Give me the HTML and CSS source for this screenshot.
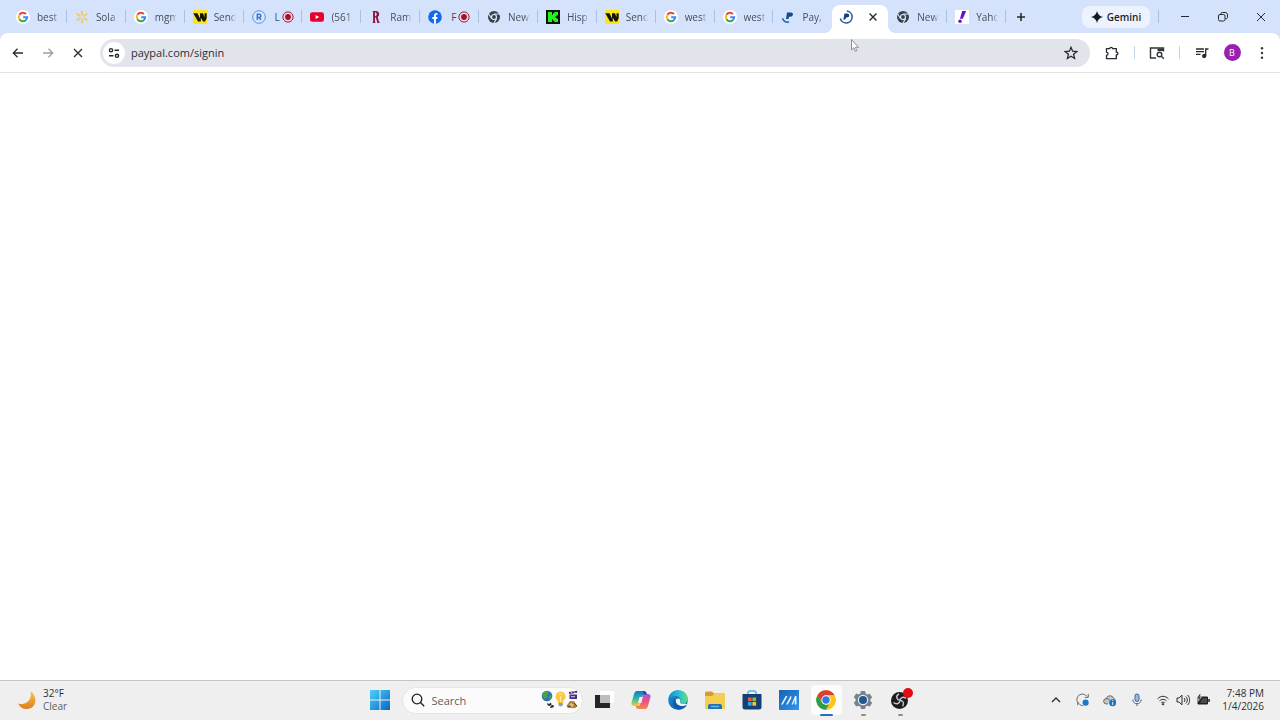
FILE: index.html
```
<!DOCTYPE html>
<html lang="en">
<head>
<meta charset="utf-8">
<title>paypal.com/signin</title>
<link rel="stylesheet" href="styles.css">
</head>
<body>
<svg class="defs" aria-hidden="true">
  <defs>
    <linearGradient id="win" x1="0" y1="0" x2="1" y2="1"><stop offset="0" stop-color="#4fd0f5"/><stop offset="1" stop-color="#0768c4"/></linearGradient>
    <linearGradient id="moon" x1="0" y1="0" x2="0" y2="1"><stop offset="0" stop-color="#fcc64a"/><stop offset="1" stop-color="#dc7f1d"/></linearGradient>
    <linearGradient id="edgeTop" x1="0" y1="0" x2="1" y2="0"><stop offset="0" stop-color="#1689d4"/><stop offset=".55" stop-color="#2bbfd0"/><stop offset="1" stop-color="#5fe07c"/></linearGradient>
    <linearGradient id="edgeLow" x1="0" y1="0" x2="1" y2="1"><stop offset="0" stop-color="#1b9be0"/><stop offset="1" stop-color="#0c4a96"/></linearGradient>
    <linearGradient id="copA" x1="0" y1="0" x2="0" y2="1"><stop offset="0" stop-color="#1674d4"/><stop offset=".5" stop-color="#2bbba0"/><stop offset="1" stop-color="#f0d032"/></linearGradient>
    <linearGradient id="copB" x1="0" y1="0" x2="0" y2="1"><stop offset="0" stop-color="#a35be0"/><stop offset=".5" stop-color="#ec5480"/><stop offset="1" stop-color="#f7884a"/></linearGradient>
    <linearGradient id="ma" x1="0" y1="0" x2="1" y2="1"><stop offset="0" stop-color="#1763b4"/><stop offset="1" stop-color="#2f96ee"/></linearGradient>
  </defs>
  <symbol id="google" viewBox="0 0 14 14">
    <circle cx="7" cy="7" r="7" fill="#fff"/>
    <g fill="none" stroke-width="2"><path d="M3.4 4.8A4.2 4.2 0 0 1 10 4" stroke="#ea4335"/><path d="M3.5 9.3A4.2 4.2 0 0 1 3.5 4.7" stroke="#fbbc05"/><path d="M9.8 10.2A4.2 4.2 0 0 1 3.4 9.2" stroke="#34a853"/><path d="M7.2 7.2h4A4.2 4.2 0 0 1 9.7 10.3" stroke="#4285f4"/></g>
  </symbol>
  <symbol id="spark" viewBox="0 0 14 14">
    <g stroke="#efcb6e" stroke-width="2" stroke-linecap="round"><path d="M7 1.5v3M7 9.5v3M2.2 4.2l2.6 1.5M9.2 8.3l2.6 1.5M2.2 9.8l2.6-1.5M9.2 5.7l2.6-1.5"/></g>
  </symbol>
  <symbol id="wu" viewBox="0 0 14 14">
    <path fill="#fde51e" d="M0 0h14v14H0z"/><path fill="#16150c" d="M.3 3.2h4.2L7 8.500V3.200h3l1.500 4V3.200h2.200v5l-1.600 3.200h-2L7.800 7.800v3.600H5z"/>
  </symbol>
  <symbol id="ring-r" viewBox="0 0 14 14">
    <circle cx="7" cy="7" r="6.3" fill="#d9e9fd" stroke="#5b8fe0" stroke-width="1"/><path d="M5.300 10V4.200h2a1.600 1.600 0 0 1 0 3.200h-2M7.200 7.400 9 10" fill="none" stroke="#3b74d3" stroke-width="1.500"/>
  </symbol>
  <symbol id="rec" viewBox="0 0 12 12">
    <circle cx="6" cy="6" r="5.1" fill="#f5dbe5" stroke="#8e1938" stroke-width="1"/><circle cx="6" cy="6" r="2.900" fill="#a3102f"/>
  </symbol>
  <symbol id="youtube" viewBox="0 0 14 14"><rect y="2.300" width="14" height="9.400" rx="2.200" fill="#e9002b"/><path d="M5.600 4.900v4.200L9.200 7z" fill="#fff"/></symbol>
  <symbol id="letter-r" viewBox="0 0 14 14"><path d="M3.300 1h4.200a3.200 3.200 0 0 1 1.200 5.900l1.400 5.200 1 .9H8.300L6.900 7.400H6v4.700l.8.900H3.300l.8-1V2zM6 2.300v3.900c2.100.2 2.500-3.800 0-3.900z" fill="#8b1747" fill-rule="evenodd"/></symbol>
  <symbol id="facebook" viewBox="0 0 14 14"><circle cx="7" cy="7" r="6.800" fill="#1668ed"/><path d="M6 13.700V9H4.300V7H6V5.500C6 3.600 7 2.700 9.500 3v1.700c-1.300-.1-1.600.2-1.600 1.100V7h1.600l-.3 2H7.900v4.700z" fill="#fff"/></symbol>
  <symbol id="chrome-mono" viewBox="0 0 14 14"><circle cx="7" cy="7" r="6" fill="#37434c"/><circle cx="7" cy="7" r="2.500" fill="#37434c" stroke="#dce8fb" stroke-width="1.200"/><path d="M7 4h6M4.400 8.500 1.600 3.800M9.600 8.600 7 13" stroke="#dce8fb" stroke-width="1.100"/></symbol>
  <symbol id="kick" viewBox="0 0 14 14"><path fill="#0b150b" d="M0 0h14v14H0z"/><path fill="#23f31e" d="M2 2h4v2.700h1V3.300h1.300V2H12v3.300h-1.300v1H9.500v1.400h1.200v1H12V12H8.300v-1.300H7V9.300H6V12H2z"/></symbol>
  <symbol id="pay" viewBox="0 0 14 14"><path d="M6 2.500h4c3 0 2.500 4.200-.7 4.200H8L7.500 9H5z" fill="#124a96"/><path d="M1.500 8.200A5.800 5.800 0 0 0 8 12" fill="none" stroke="#2865b7" stroke-width="1.600"/></symbol>
  <symbol id="pay-load" viewBox="0 0 14 14"><path d="M5.500 3.500h2.800c2.800 0 2.400 4-.4 4h-1L6.500 9.500H4.300z" fill="#123e83"/><path d="M1.300 8.500A6 6 0 1 0 7.800 1" fill="none" stroke="#225796" stroke-width="1.500"/></symbol>
  <symbol id="yahoo" viewBox="0 0 14 14"><path fill="#fff" d="M0 0h14v14H0z"/><path d="M7.200 1h4L7.800 8.800H5z" fill="#6413bd"/><circle cx="5" cy="11.200" r="1.700" fill="#6413bd"/></symbol>
  <symbol id="cross" viewBox="0 0 14 14"><path d="M3 3L11 11M11 3L3 11"/></symbol>
</svg>

<header class="browser">
  <div class="strip">
    <nav class="tabs" aria-label="Tabs">
      <button class="tab"><svg class="fav"><use href="#google"/></svg><span class="title">best</span></button>
      <button class="tab"><svg class="fav"><use href="#spark"/></svg><span class="title">Sola</span></button>
      <button class="tab"><svg class="fav"><use href="#google"/></svg><span class="title">mgm</span></button>
      <button class="tab"><svg class="fav"><use href="#wu"/></svg><span class="title">Send</span></button>
      <button class="tab"><svg class="fav"><use href="#ring-r"/></svg><span class="title short">L</span><svg class="rec"><use href="#rec"/></svg></button>
      <button class="tab"><svg class="fav"><use href="#youtube"/></svg><span class="title">(561</span></button>
      <button class="tab"><svg class="fav"><use href="#letter-r"/></svg><span class="title">Ram</span></button>
      <button class="tab"><svg class="fav"><use href="#facebook"/></svg><span class="title short">F</span><svg class="rec"><use href="#rec"/></svg></button>
      <button class="tab"><svg class="fav"><use href="#chrome-mono"/></svg><span class="title">New</span></button>
      <button class="tab"><svg class="fav"><use href="#kick"/></svg><span class="title">Hisp</span></button>
      <button class="tab"><svg class="fav"><use href="#wu"/></svg><span class="title">Send</span></button>
      <button class="tab"><svg class="fav"><use href="#google"/></svg><span class="title">west</span></button>
      <button class="tab"><svg class="fav"><use href="#google"/></svg><span class="title">west</span></button>
      <button class="tab plain"><svg class="fav"><use href="#pay"/></svg><span class="title">Pay,</span></button>
      <div class="tab active"><svg class="fav"><use href="#pay-load"/></svg><button class="close" aria-label="Close tab"><svg class="line bold"><use href="#cross"/></svg></button></div>
      <button class="tab"><svg class="fav"><use href="#chrome-mono"/></svg><span class="title">New</span></button>
      <button class="tab"><svg class="fav"><use href="#yahoo"/></svg><span class="title">Yaho</span></button>
    </nav>
    <button class="new-tab" aria-label="New tab"><svg class="line bold" viewBox="0 0 14 14"><path d="M7 3v8M3 7h8"/></svg></button>
    <button class="gemini"><svg viewBox="0 0 12 12"><path d="M6 0Q7 5 12 6 7 7 6 12 5 7 0 6 5 5 6 0z" fill="#15181c"/></svg>Gemini</button>
    <span class="divider strong"></span>
    <button class="win" aria-label="Minimize"><svg class="line" viewBox="0 0 14 14"><path d="M3 6.500h8"/></svg></button>
    <button class="win" aria-label="Restore"><svg class="line" viewBox="0 0 14 14"><rect x="2.500" y="4.500" width="6.500" height="6.500" rx="1.500"/><path d="M4.800 4.300V4c0-.9.5-1.500 1.400-1.500H9c1.600 0 2.500.9 2.500 2.500v2.300c0 .9-.6 1.500-1.500 1.500h-.8"/></svg></button>
    <button class="win" aria-label="Close window"><svg class="line"><use href="#cross"/></svg></button>
  </div>

  <div class="toolbar">
    <button class="tool" aria-label="Back"><svg class="line mid" viewBox="0 0 14 14"><path d="M12 7H2.500M6.500 2.700 2.300 7l4.200 4.300"/></svg></button>
    <button class="tool faded" aria-label="Forward"><svg class="line mid" viewBox="0 0 14 14"><path d="M2 7h9.500M7.500 2.700 11.700 7l-4.200 4.300"/></svg></button>
    <button class="tool" aria-label="Stop"><svg class="line mid"><use href="#cross"/></svg></button>
    <div class="omnibox">
      <button class="site" aria-label="Site information"><svg viewBox="0 0 14 14" fill="none" stroke="#252a30" stroke-width="1.400"><circle cx="4" cy="4.200" r="1.600"/><path d="M7.500 4.200H12M2 9.800h4.500"/><circle cx="10" cy="9.800" r="1.600"/></svg></button>
      <input class="url" type="text" value="paypal.com/signin" aria-label="Address" spellcheck="false">
      <button class="star" aria-label="Bookmark this tab"><svg class="line mid" viewBox="0 0 14 14"><path d="m7 1.300 1.600 3.900 4.200.4-3.200 2.700 1 4.200L7 10.300l-3.600 2.200 1-4.200-3.200-2.700 4.200-.4z"/></svg></button>
    </div>
    <button class="tool ext" aria-label="Extensions"><svg class="line mid" viewBox="0 0 14 14"><path d="M1.500 2.700h3.200C4.700 1 7.600 1 7.600 2.700h3.700v3.400c2.300 0 2.300 2.900 0 2.900v3.700H1.500V9.300c2.100-.2 2.100-3 0-3.200z"/></svg></button>
    <span class="divider"></span>
    <button class="tool" aria-label="Search this page"><svg class="wide" viewBox="0 0 16 14" fill="none" stroke="#30353a" stroke-width="1.400"><path d="M7 12H1.500V2H14.500V5.500"/><path d="M8.500 2.500H14v2.500H8.500z" fill="#30353a" stroke="none"/><circle cx="10.500" cy="8.500" r="2.300"/><path d="m12.300 10.300 2.500 2.500"/></svg></button>
    <span class="divider"></span>
    <button class="tool" aria-label="Media controls"><svg class="line mid" viewBox="0 0 14 14"><path d="M1 3h8M1 5.700h8M1 8.400h4.500M10.700 10V3h2.800"/><circle cx="9.200" cy="10" r="1.500" fill="#30353a"/></svg></button>
    <button class="tool" aria-label="Profile"><span class="avatar">B</span></button>
    <button class="tool" aria-label="Menu"><svg viewBox="0 0 14 14" fill="#30353a"><circle cx="7" cy="2.200" r="1.200"/><circle cx="7" cy="7" r="1.200"/><circle cx="7" cy="11.800" r="1.200"/></svg></button>
  </div>
</header>

<main class="page"></main>

<footer class="taskbar">
  <button class="weather">
    <svg viewBox="0 0 20 20"><path d="M13.400 1C21 6 20 19 9.500 19 5.500 19 2.500 17 1 13.500 9.500 16 15.500 9.500 13.400 1z" fill="url(#moon)"/></svg>
    <span>32°F<br><span class="soft">Clear</span></span>
  </button>
  <div class="dock">
    <button class="app" aria-label="Start"><svg viewBox="0 0 20 20"><path d="M0 0h9.500v9.500H0zM10.500 0H20v9.500h-9.500zM0 10.500h9.500V20H0zM10.500 10.500H20V20h-9.500z" fill="url(#win)"/></svg></button>
    <label class="search">
      <svg class="glass" viewBox="0 0 14 14" fill="none" stroke="#1d1d1f" stroke-width="1.300"><circle cx="6" cy="6" r="4.800"/><path d="m9.500 9.500 3.700 3.700"/></svg>
      <input type="text" placeholder="Search" aria-label="Search">
      <svg class="art" viewBox="0 0 38 20"><circle cx="6" cy="6" r="5.300" fill="#2a73c0"/><path d="M2 2.500 6 1l2 2-2 2 1 2-3 2-3-3zM8 6l3-1-1 4-2 1z" fill="#4aa348"/><path d="m6 13 2 1 2-1.500.5 2.500L8 16l-1.500-1zM9 17l2-2 2 .5-.5 1.800-3 .7z" fill="#25282b"/><path d="M19.500 1.500a5 5 0 0 1 2.800 9.200V13h-5.400v-2.300a5 5 0 0 1 2.600-9.200z" fill="#f7c946"/><path d="M18 4.500c1-1.500 2.500-1 3 0M19.500 6v6" fill="none" stroke="#fff0a0"/><path d="M17.500 13h4.300v2.500l-2 1-2.300-1z" fill="#929da4"/><path d="m28 2 8-1.300.3 2L28 4zM28.500 4.500H36V9h-7.500z" fill="#49327d"/><path d="m30 1.600 1 1.600m2-2 1 1.600M30 6.700h4" stroke="#d9cdec"/><path d="M25.500 16 29 11l4 .2 3.500 5.300-3 1.800-7-.8z" fill="#a77a37"/><path d="m28 15 2-2.300 3 2-1.500 2.500z" fill="#e6c372"/><path d="m27 17 3-1m3-3 3 3" stroke="#55421f"/></svg>
    </label>
    <button class="app" aria-label="Task view"><svg viewBox="0 0 20 20"><path d="M1 5h15v13H1z" fill="#252525"/><path d="M6 1h14v12H6z" fill="#fff" opacity=".9"/><path d="M6 5h10v8H6z" fill="#bdbdbd"/></svg></button>
    <button class="app" aria-label="Copilot"><svg viewBox="0 0 20 20"><path d="M6 1h7c1.500 0 2 1 2.400 2l.6 2h-3c-1 0-1.600.6-2 1.700L8.500 14c-.5 1.500-1.400 2-3 2H3c-2 0-3-1.500-2.400-3.500L3 4C3.600 2 4.500 1 6 1z" fill="url(#copA)"/><path d="M14 19H7.500C6 19 5.300 18 5 17l-.5-1H7c1 0 1.700-.6 2-1.700L11.500 6c.5-1.500 1.300-2 3-2H17c2 0 3 1.500 2.400 3.500L17 16c-.6 2-1.500 3-3 3z" fill="url(#copB)"/><path d="M8.500 7h3.300l-1.500 6H7z" fill="#f3f0ef"/><path d="M12 1h1c1.500 0 2 1 2.400 2l.6 1.500h-3.500z" fill="#1c4fae"/></svg></button>
    <button class="app" aria-label="Edge"><svg viewBox="0 0 20 20"><circle cx="10" cy="10" r="9.800" fill="url(#edgeLow)"/><path d="M.3 9C1.500 3 5.500.2 10 .2c6 0 9.800 4.300 9.800 8.500 0 3.300-2.500 5-5.300 5-2.200 0-3.300-.9-2.500-2 1.600-2.400-.5-5.700-4.200-5.700C4 6 1 7.500.3 9z" fill="url(#edgeTop)"/><path d="M8.200 9.200c-1.800 3 1.500 7.300 5.800 7.200 2 0 3.500-.6 5-1.700-.6-.8-1.200-1.300-1.200-1.300-3 1-6.500.3-5.800-1.700 1-1.700-.6-4.400-3.800-2.500z" fill="#f2f7fa"/><path d="M7 8.500C2 13 6 18.700 11 19.700c3.500-.4 6.500-2.200 8-4.700-5 2.500-12.500.5-12-6.500z" fill="#155aa5"/></svg></button>
    <button class="app" aria-label="File Explorer"><svg viewBox="0 0 20 20"><path d="M0 3q0-1.500 1.500-1.500H7l2 2h9.500Q20 3.500 20 5v3H0z" fill="#d99c2b"/><path d="M0 6h7l2-2h9.500Q20 4 20 5.500V19H0z" fill="#f4cf52"/><path d="M3 19v-3q0-2 2-2h10q2 0 2 2v3z" fill="#1b73b8"/><path d="M6 16.500h8" stroke="#67b6e1" stroke-width="1.500"/></svg></button>
    <button class="app" aria-label="Microsoft Store"><svg viewBox="0 0 20 20"><path d="M6 5V3q0-2 2-2h4q2 0 2 2v2" fill="none" stroke="#4bb9e5" stroke-width="1.500"/><path d="M.5 4h19v13q0 2.500-2.500 2.500H3Q.5 19.500.5 17z" fill="#153f75"/><path d="M6 7.500h3.700v3.700H6z" fill="#f15b37"/><path d="M10.400 7.500h3.700v3.700h-3.700z" fill="#7ac143"/><path d="M6 12h3.700v3.700H6z" fill="#28a8e2"/><path d="M10.400 12h3.700v3.700h-3.700z" fill="#fbc23a"/></svg></button>
    <button class="app" aria-label="MyASUS"><svg viewBox="0 0 20 20"><path d="M0 0h20v20H0z" fill="url(#ma)"/><path d="M2 14.500h1.800L8.500 6H6.700zM7 14.500h1.800l3.500-6.300V6h-.7zM12.500 14.500l3.500-8.500h1.500v8.500h-1.800V10l-1.700 4.500z" fill="#e4f3ff"/></svg></button>
    <button class="app current" aria-label="Chrome"><svg viewBox="0 0 20 20"><circle cx="10" cy="10" r="9.700" fill="#f9c41c"/><path d="M1.500 5.200A9.700 9.700 0 0 1 18.500 5.300H10L5.900 12.300z" fill="#df3c32"/><path d="M1.500 5.200 5.900 12.400 10 14.700h4l-4 5A9.700 9.700 0 0 1 1.500 5.200z" fill="#2c9e4b"/><path d="M14 12.500 9.900 19.700A9.700 9.700 0 0 0 18.500 5.300H10z" fill="#f9c41c"/><circle cx="10" cy="10" r="4.700" fill="#fff"/><circle cx="10" cy="10" r="3.700" fill="#2d79e4"/></svg></button>
    <button class="app running" aria-label="Settings"><svg viewBox="0 0 20 20"><path d="M8 1h4l.7 2.600 1.500.8 2.600-.7 2.400 3.700L17.400 9v2l1.800 1.800-2.300 3.600-2.700-.7-1.500.8L12 19H8l-.7-2.500-1.500-.8-2.700.7-2.300-3.600L2.600 11V9L.8 7.200l2.300-3.600 2.700.8 1.500-.8z" fill="#77818b"/><circle cx="10" cy="10" r="5.200" fill="#e6edf4"/><circle cx="10" cy="10" r="4" fill="#21588e"/></svg></button>
    <button class="app running" aria-label="OBS Studio"><svg viewBox="0 0 20 20"><circle cx="9.500" cy="10.500" r="8.500" fill="#1d1c1f"/><path d="M9 4c-4 2-2 6 .8 6.300 3.200.3 5 3 2.700 6M16 8.500c-3-2.700-6-.6-6 2-.2 3-3.500 4.300-6.500 2" fill="none" stroke="#c8c8ca" stroke-width="1.400"/></svg><span class="badge"></span></button>
  </div>
  <div class="tray">
    <button class="status" aria-label="Show hidden icons"><svg class="line mid" viewBox="0 0 14 14"><path d="m3 9 4-4 4 4"/></svg></button>
    <button class="status" aria-label="Update"><svg viewBox="0 0 16 16"><path d="M2 11A6 6 0 0 1 12.500 4M14 1v4h-4M2.500 10.500c1 2.500 3 4 5.500 4M2 14v-3" fill="none" stroke="#555"/><circle cx="11" cy="11" r="3.500" fill="#1b78c7"/></svg></button>
    <button class="status" aria-label="OneDrive"><svg viewBox="0 0 16 16"><path d="M5.500 12.500H4a3 3 0 0 1-.5-6C5 2.500 10.500 2 12 6a3 3 0 0 1 2 3" fill="#c8c8c8" stroke="#555"/><path d="M3.500 6.500C6 6 7 8 9 9" fill="none" stroke="#555"/><circle cx="11" cy="11" r="4" fill="#1b78c7"/><path d="M11 10.300V13.500M11 8.300v1" stroke="#fff"/></svg></button>
    <button class="status" aria-label="Microphone"><svg viewBox="0 0 14 14" fill="none" stroke="#456295"><rect x="5" y="1" width="4" height="7.500" rx="2" fill="#9eb8dc"/><path d="M2.800 6.500c0 5.600 8.400 5.600 8.400 0M7 10.800V13"/></svg></button>
    <button class="status net" aria-label="Network, sound and battery">
      <svg viewBox="0 0 14 14" fill="none" stroke="#2d2d2d"><path d="M1.500 6c3-3.600 8-3.600 11 0M3.500 8c2-2.200 5-2.200 7 0M5.300 9.900c1-1 2.400-1 3.400 0"/><circle cx="7" cy="11.300" r=".7" fill="#2d2d2d"/></svg>
      <svg viewBox="0 0 14 14" fill="none" stroke="#2d2d2d"><path d="M1 5h2l3-2.800v9.600L3 9H1zM8 5c1.300 1.100 1.300 2.900 0 4M9.700 3.500c2.200 2 2.200 5 0 7M11.500 2c3 3 3 7 0 10"/></svg>
      <svg viewBox="0 0 14 14"><path d="M2 4h9.500v7H2z" fill="#202020" stroke="#202020" stroke-linejoin="round"/><path d="M12.300 6h1.500v3h-1.500z" fill="#202020"/><path d="M6.500 5H11v5H4z" fill="#4a4a4a"/><path d="M3.500 1 .8 5.200h2L2 8.500l3.500-4.300H3.700L5 1z" fill="#202020" stroke="#eee" stroke-width=".6"/></svg>
    </button>
    <button class="clock">7:48 PM<br>1/4/2026</button>
  </div>
</footer>

<svg class="pointer" viewBox="0 0 8 13"><path d="M.5.500v10.300l2.200-2 1.500 3.500 1.600-.7-1.500-3.300h3.100z" fill="#fff" stroke="#74777e" stroke-width=".8"/></svg>
</body>
</html>
```
FILE: styles.css
```
* { box-sizing: border-box; }

body {
  margin: 0;
  min-height: 100vh;
  display: flex;
  flex-direction: column;
  background: #fff;
  color: #34373c;
  font-family: "Open Sans", "Noto Sans", sans-serif;
  font-size: 11px;
}

button {
  margin: 0;
  padding: 0;
  border: 0;
  background: none;
  color: inherit;
  font: inherit;
  display: flex;
  align-items: center;
  justify-content: center;
  flex: none;
}

input {
  border: 0;
  padding: 0;
  margin: 0;
  background: none;
  font: inherit;
  min-width: 0;
  outline: 0;
}

svg { display: block; width: 14px; height: 14px; flex: none; }
.defs { position: absolute; width: 0; height: 0; }

.line { fill: none; stroke: #272b31; stroke-width: 1; }
.line.mid { stroke-width: 1.3; }
.line.bold { stroke-width: 1.6; }

/* Tab strip */
.browser { background: #d5e2fc; }
.strip { display: flex; align-items: center; height: 33px; padding-left: 8px; }
.tabs { display: flex; flex: 1; max-width: 998px; height: 33px; min-width: 0; }
.tab {
  flex: 1 1 0;
  min-width: 0;
  position: relative;
  display: flex;
  align-items: center;
  justify-content: flex-start;
  padding-left: 8px;
  color: #464e5c;
  font-size: 10px;
}
.tab::after {
  content: "";
  position: absolute;
  right: 0;
  top: 10px;
  width: 1px;
  height: 13px;
  background: #a9c0e6;
}
.tab.plain::after { display: none; }
.title {
  margin-left: 7px;
  width: 24px;
  overflow: hidden;
  white-space: nowrap;
  text-align: left;
  mask-image: linear-gradient(90deg, #000 16px, transparent 22px);
}
.title.short { width: 6px; margin-left: 9px; mask-image: none; }
.rec { width: 12px; height: 12px; margin-left: 1px; }

.tab.active {
  flex: 0 0 56px;
  align-self: flex-end;
  height: 28px;
  padding: 0 8px 5px 7px;
  justify-content: space-between;
  border-radius: 8px 8px 0 0;
  background: #fff;
}
.tab.active::after,
.tab.active::before {
  content: "";
  position: absolute;
  top: auto;
  bottom: 0;
  width: 8px;
  height: 8px;
}
.tab.active::before { left: -8px; background: radial-gradient(circle at 0 0, transparent 8px, #fff 8px); }
.tab.active::after { right: -8px; background: radial-gradient(circle at 100% 0, transparent 8px, #fff 8px); }
.close { width: 14px; height: 14px; }
.close svg { width: 12px; height: 12px; }

.new-tab { width: 29px; height: 28px; }
.gemini {
  margin-left: auto;
  width: 68px;
  height: 22px;
  gap: 4px;
  border-radius: 8px;
  background: #ecf3fe;
  color: #1b1e23;
  font-size: 10px;
  font-weight: 600;
}
.gemini svg { width: 12px; height: 12px; }
.divider { width: 1px; height: 13px; margin: 0 7px; background: #c3d5ed; flex: none; }
.divider.strong { margin-left: 8px; background: #a9bdea; }
.win { width: 38px; height: 32px; }

/* Toolbar */
.toolbar {
  display: flex;
  align-items: center;
  height: 40px;
  padding: 0 3px;
  border-bottom: 1px solid #e2e2e0;
  border-radius: 8px 8px 0 0;
  background: #fff;
}
.tool { width: 30px; height: 28px; }
.tool.faded { opacity: .45; }
.tool .wide { width: 16px; }
.omnibox {
  flex: 1;
  min-width: 0;
  height: 28px;
  margin: 0 7px;
  padding: 0 12px 0 3px;
  display: flex;
  align-items: center;
  border-radius: 14px;
  background: #e2e4ec;
}
.site { width: 22px; height: 22px; border-radius: 50%; background: #fff; }
.url { flex: 1; margin-left: 6px; color: #2b2f36; }
.avatar {
  width: 17px;
  height: 17px;
  border-radius: 50%;
  background: #9a21b0;
  color: #fff;
  font-size: 9px;
  line-height: 17px;
}

.page { flex: 1; }

/* Taskbar */
.taskbar {
  display: grid;
  grid-template-columns: 1fr auto 1fr;
  align-items: center;
  height: 40px;
  padding-bottom: 1px;
  border-top: 1px solid #c4c4c4;
  background: #efefef;
}
.weather, .clock { font-size: 10px; line-height: 13px; color: #303030; }
.weather { justify-self: start; gap: 6px; padding-left: 17px; text-align: left; }
.weather svg { width: 20px; height: 20px; }
.soft { color: #606060; }
.dock { display: flex; align-items: center; }
.app { position: relative; width: 37px; height: 38px; }
.app svg { width: 20px; height: 20px; }
.app.current::before {
  content: "";
  position: absolute;
  inset: 4px 3px;
  border-radius: 4px;
  background: #fcfcfc;
}
.app.current svg { position: relative; }
.app.running::after,
.app.current::after {
  content: "";
  position: absolute;
  bottom: 3px;
  width: 5px;
  height: 2px;
  border-radius: 1px;
  background: #8d8d8d;
}
.app.current::after { width: 13px; background: #2370c0; }
.badge {
  position: absolute;
  top: 7px;
  right: 6px;
  width: 10px;
  height: 10px;
  border-radius: 50%;
  background: #e70914;
}
.search {
  display: flex;
  align-items: center;
  width: 181px;
  height: 27px;
  margin: 0 3px;
  padding: 0 3px 0 8px;
  border: 1px solid #e5e5e5;
  border-radius: 14px;
  background: #fbfbfb;
}
.search input { flex: 1; margin-left: 7px; }
.search input::placeholder { color: #606060; opacity: 1; }
.search .art { width: 38px; height: 20px; }
.tray { display: flex; align-items: center; justify-self: end; padding-right: 16px; }
.status { width: 27px; height: 32px; }
.status.net { width: 66px; gap: 6px; }
.clock { margin-left: 6px; text-align: right; justify-content: flex-end; }

.pointer { position: absolute; left: 851px; top: 39px; width: 8px; height: 13px; }
```
